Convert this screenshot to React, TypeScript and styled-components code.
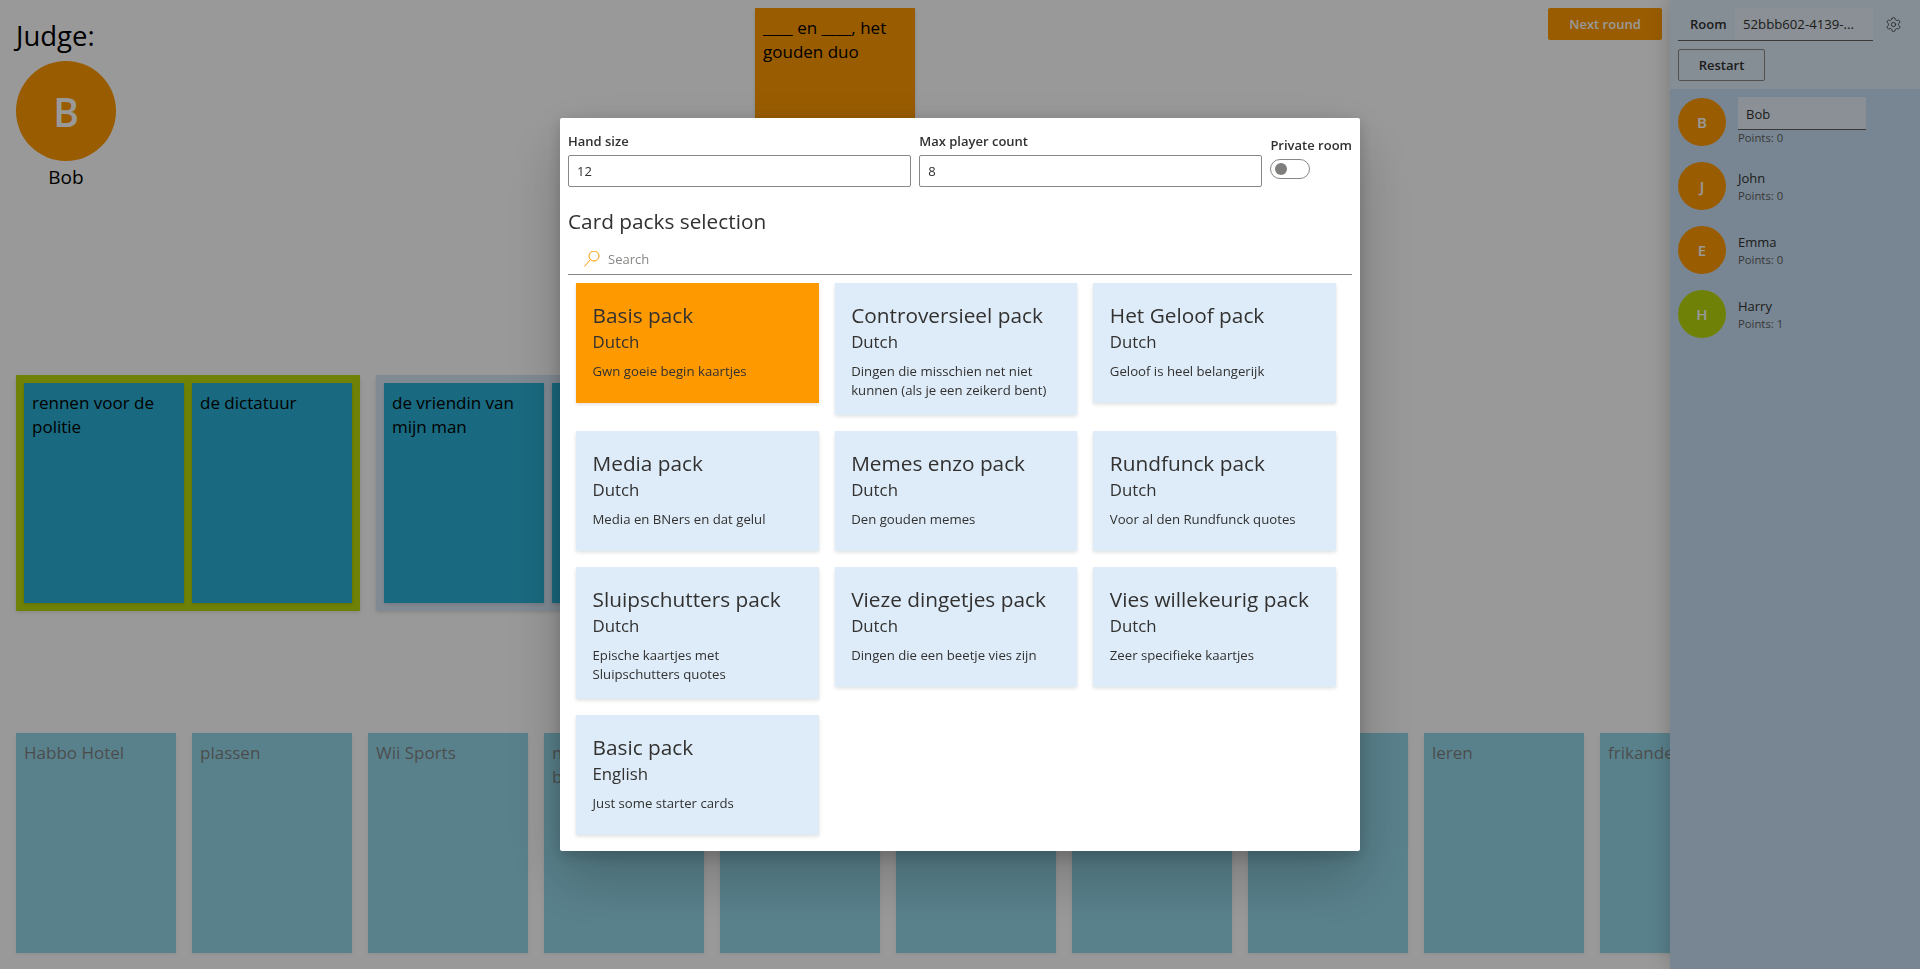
import React, { FC } from 'react';
import styled, { createGlobalStyle } from 'styled-components';
import { Settings } from 'lucide-react';

const GlobalStyle = createGlobalStyle`
    html, body {
        margin: 0;
        padding: 0;
        height: 100%;
        overflow: hidden;
        background: #fff;
        font-family: "Open Sans", "Liberation Sans", sans-serif;
        color: #323130;
    }
    * {
        box-sizing: border-box;
    }
`;

const Page = styled.div`
    display: flex;
    width: 100vw;
    height: 100vh;
    overflow: hidden;
`;
const Main = styled.main`
    flex: 1;
    min-width: 0;
    overflow: hidden;
    display: flex;
    flex-direction: column;
`;
const TopRow = styled.div`
    display: grid;
    grid-template-columns: 1fr 160px 1fr;
    padding: 8px 8px 0;
`;
const JudgeBox = styled.div`
    width: 100px;
    margin-left: 8px;
    color: #000;
`;
const JudgeTitle = styled.div`
    font-size: 27.5px;
    line-height: 36px;
    margin-top: 10px;
    margin-bottom: 7px;
    white-space: nowrap;
`;
const JudgeName = styled.div`
    font-size: 19px;
    line-height: 26px;
    margin-top: 3px;
    text-align: center;
`;
const Avatar = styled.div<{ $size: number; $color: string }>`
    width: ${p => p.$size}px;
    height: ${p => p.$size}px;
    flex: none;
    border-radius: 50%;
    background: ${p => p.$color};
    color: #fff;
    display: flex;
    align-items: center;
    justify-content: center;
    font-size: ${p => (p.$size > 60 ? 39 : 15)}px;
    font-weight: 600;
`;
const Card = styled.div<{ $color: string; $faded?: boolean }>`
    flex: none;
    width: 160px;
    height: 220px;
    padding: 8px;
    background: ${p => p.$color};
    color: #000;
    font-size: 17px;
    line-height: 24px;
    overflow: hidden;
    opacity: ${p => (p.$faded ? 0.5 : 1)};
    box-shadow: 0 1.6px 3.6px rgba(0, 0, 0, 0.13), 0 0.3px 0.9px rgba(0, 0, 0, 0.11);
`;
const NextButton = styled.button`
    justify-self: end;
    width: 114px;
    height: 32px;
    border: 0;
    border-radius: 2px;
    background: #ff9900;
    color: #fff;
    font-family: inherit;
    font-size: 13px;
    font-weight: 600;
`;
const AnswerRow = styled.div`
    display: flex;
    gap: 16px;
    margin: 147px 0 0 16px;
`;
const AnswerGroup = styled.div<{ $winner?: boolean }>`
    flex: none;
    display: flex;
    gap: 8px;
    padding: 8px;
    background: ${p => (p.$winner ? '#bad80a' : '#d8e6f6')};
    box-shadow: 0 1.6px 3.6px rgba(0, 0, 0, 0.13), 0 0.3px 0.9px rgba(0, 0, 0, 0.11);
`;
const HandRow = styled.div`
    display: flex;
    gap: 16px;
    margin: 122px 0 0 16px;
`;
const Sidebar = styled.aside`
    flex: none;
    width: 250px;
    background: #c7e0f4;
    box-shadow: 0 0 21px rgba(0, 0, 0, 0.22);
    position: relative;
`;
const RoomHeader = styled.div`
    height: 89px;
    padding: 8px;
    background: #deecf9;
`;
const RoomLine = styled.div`
    display: flex;
    align-items: center;
`;
const RoomField = styled.div`
    width: 195px;
    height: 33px;
    display: flex;
    border-bottom: 1px solid #605e5c;
`;
const RoomLabel = styled.label`
    width: 57px;
    padding-left: 12px;
    font-size: 13px;
    font-weight: 600;
    line-height: 32px;
    color: #323130;
`;
const RoomValue = styled.div`
    flex: 1;
    padding-left: 8px;
    background: #e6f0f8;
    font-size: 13.2px;
    line-height: 32px;
    white-space: nowrap;
    overflow: hidden;
`;
const GearButton = styled.span`
    display: flex;
    margin-left: 12px;
    color: #323130;
`;
const RestartButton = styled.button`
    display: block;
    width: 87px;
    height: 32px;
    margin-top: 8px;
    border: 1px solid #8a8886;
    border-radius: 2px;
    background: transparent;
    color: #323130;
    font-family: inherit;
    font-size: 13px;
    font-weight: 600;
`;
const PlayerList = styled.div`
    padding: 9px 8px 0;
    display: flex;
    flex-direction: column;
    gap: 16px;
`;
const PlayerRow = styled.div`
    display: flex;
    align-items: center;
    gap: 12px;
    height: 48px;
`;
const PlayerInfo = styled.div`
    display: flex;
    flex-direction: column;
`;
const PlayerName = styled.div`
    padding-top: 1px;
    font-size: 13px;
    line-height: 19px;
    color: #323130;
`;
const PlayerInput = styled.div`
    width: 128px;
    height: 33px;
    padding-left: 8px;
    margin-bottom: -1px;
    background: #e6f0f8;
    border-bottom: 1px solid #605e5c;
    font-size: 13px;
    line-height: 34px;
    color: #323130;
`;
const PlayerPoints = styled.div<{ $tight?: boolean }>`
    margin-top: ${p => (p.$tight ? -1 : 0)}px;
    font-size: 11.3px;
    line-height: 18px;
    color: #605e5c;
`;
const Overlay = styled.div`
    position: fixed;
    inset: 0;
    background: rgba(0, 0, 0, 0.4);
    display: flex;
    align-items: center;
    justify-content: center;
`;
const Modal = styled.div`
    width: 800px;
    height: 733px;
    padding: 8px;
    background: #fff;
    border-radius: 2px;
    box-shadow: 0 25.6px 57.6px rgba(0, 0, 0, 0.22), 0 4.8px 14.4px rgba(0, 0, 0, 0.18);
`;
const SettingsRow = styled.div`
    display: flex;
    gap: 8px;
`;
const Field = styled.div`
    width: 343.5px;
`;
const FieldLabel = styled.label`
    display: block;
    height: 29px;
    padding-top: 5px;
    font-size: 13px;
    font-weight: 600;
    line-height: 20px;
    color: #323130;
`;
const FieldInput = styled.div`
    height: 32px;
    padding-left: 8px;
    border: 1px solid #8a8886;
    border-radius: 2px;
    font-size: 13px;
    line-height: 30px;
    color: #323130;
`;
const ToggleField = styled.div``;
const ToggleLabel = styled(FieldLabel)`
    height: 33px;
    padding-top: 9px;
    white-space: nowrap;
`;
const Toggle = styled.span`
    display: flex;
    align-items: center;
    width: 40px;
    height: 20px;
    padding-left: 4px;
    border: 1px solid #8a8886;
    border-radius: 10px;
`;
const ToggleDot = styled.span`
    width: 12px;
    height: 12px;
    border-radius: 50%;
    background: #807e7c;
`;
const SectionTitle = styled.div`
    margin-top: 20px;
    font-size: 20.8px;
    line-height: 28px;
    color: #323130;
`;
const SearchBox = styled.div`
    display: flex;
    align-items: center;
    height: 32px;
    margin-top: 8px;
    padding-left: 16px;
    gap: 8px;
    border-bottom: 1px solid #8a8886;
    font-size: 13px;
    color: #8a8886;
`;
const PackGrid = styled.div`
    display: grid;
    grid-template-columns: repeat(3, 242.67px);
    gap: 16px;
    align-items: start;
    margin: 8px 0 0 8px;
`;
const PackCard = styled.div<{ $selected?: boolean }>`
    min-height: 120px;
    padding: 18px 16.5px 15px;
    background: ${p => (p.$selected ? '#ff9900' : '#deecf9')};
    color: #323130;
    box-shadow: 0 1.6px 3.6px rgba(0, 0, 0, 0.13), 0 0.3px 0.9px rgba(0, 0, 0, 0.11);
`;
const PackTitle = styled.div`
    margin-bottom: 2px;
    font-size: 20.8px;
    line-height: 28px;
`;
const PackLanguage = styled.div`
    font-size: 16.8px;
    line-height: 22px;
`;
const PackText = styled.div`
    margin-top: 9px;
    font-size: 13.2px;
    line-height: 19px;
`;

const SearchIcon: FC = () => (
    <svg width="16" height="16" viewBox="0 0 16 16" fill="none" stroke="#ff9900" strokeWidth="1">
        <circle cx="10" cy="5" r="5" />
        <line x1="6.4" y1="8.6" x2="0.5" y2="15.5" />
    </svg>
);

const teal = '#2bb0d5';
const orange = '#ff9900';
const green = '#bad80a';

const hand = ['Habbo Hotel', 'plassen', 'Wii Sports', 'nationale belastingdienst', '', '', '', '', 'leren', 'frikandel'];

const players = [
    { name: 'Bob', points: 0, color: orange, self: true },
    { name: 'John', points: 0, color: orange },
    { name: 'Emma', points: 0, color: orange },
    { name: 'Harry', points: 1, color: green },
];

const packs = [
    { title: 'Basis pack', language: 'Dutch', text: 'Gwn goeie begin kaartjes', selected: true },
    { title: 'Controversieel pack', language: 'Dutch', text: 'Dingen die misschien net niet kunnen (als je een zeikerd bent)' },
    { title: 'Het Geloof pack', language: 'Dutch', text: 'Geloof is heel belangerijk' },
    { title: 'Media pack', language: 'Dutch', text: 'Media en BNers en dat gelul' },
    { title: 'Memes enzo pack', language: 'Dutch', text: 'Den gouden memes' },
    { title: 'Rundfunck pack', language: 'Dutch', text: 'Voor al den Rundfunck quotes' },
    { title: 'Sluipschutters pack', language: 'Dutch', text: 'Epische kaartjes met Sluipschutters quotes' },
    { title: 'Vieze dingetjes pack', language: 'Dutch', text: 'Dingen die een beetje vies zijn' },
    { title: 'Vies willekeurig pack', language: 'Dutch', text: 'Zeer specifieke kaartjes' },
    { title: 'Basic pack', language: 'English', text: 'Just some starter cards' },
];

const App: FC = () => {
    return (
        <Page>
            <GlobalStyle />
            <Main>
                <TopRow>
                    <JudgeBox>
                        <JudgeTitle>Judge:</JudgeTitle>
                        <Avatar $size={100} $color={orange}>B</Avatar>
                        <JudgeName>Bob</JudgeName>
                    </JudgeBox>
                    <Card $color={orange}>____ en ____, het gouden duo</Card>
                    <NextButton>Next round</NextButton>
                </TopRow>
                <AnswerRow>
                    <AnswerGroup $winner>
                        <Card $color={teal}>rennen voor de politie</Card>
                        <Card $color={teal}>de dictatuur</Card>
                    </AnswerGroup>
                    <AnswerGroup>
                        <Card $color={teal}>de vriendin van mijn man</Card>
                        <Card $color={teal} />
                    </AnswerGroup>
                </AnswerRow>
                <HandRow>
                    {hand.map((text, i) => (
                        <Card key={i} $color={teal} $faded>{text}</Card>
                    ))}
                </HandRow>
            </Main>
            <Sidebar>
                <RoomHeader>
                    <RoomLine>
                        <RoomField>
                            <RoomLabel>Room</RoomLabel>
                            <RoomValue>52bbb602-4139-...</RoomValue>
                        </RoomField>
                        <GearButton><Settings size={17} strokeWidth={1.1} /></GearButton>
                    </RoomLine>
                    <RestartButton>Restart</RestartButton>
                </RoomHeader>
                <PlayerList>
                    {players.map(player => (
                        <PlayerRow key={player.name}>
                            <Avatar $size={48} $color={player.color}>{player.name[0]}</Avatar>
                            <PlayerInfo>
                                {player.self
                                    ? <PlayerInput>{player.name}</PlayerInput>
                                    : <PlayerName>{player.name}</PlayerName>}
                                <PlayerPoints $tight={!player.self}>Points: {player.points}</PlayerPoints>
                            </PlayerInfo>
                        </PlayerRow>
                    ))}
                </PlayerList>
            </Sidebar>
            <Overlay>
                <Modal>
                    <SettingsRow>
                        <Field>
                            <FieldLabel>Hand size</FieldLabel>
                            <FieldInput>12</FieldInput>
                        </Field>
                        <Field>
                            <FieldLabel>Max player count</FieldLabel>
                            <FieldInput>8</FieldInput>
                        </Field>
                        <ToggleField>
                            <ToggleLabel>Private room</ToggleLabel>
                            <Toggle><ToggleDot /></Toggle>
                        </ToggleField>
                    </SettingsRow>
                    <SectionTitle>Card packs selection</SectionTitle>
                    <SearchBox>
                        <SearchIcon />
                        Search
                    </SearchBox>
                    <PackGrid>
                        {packs.map(pack => (
                            <PackCard key={pack.title} $selected={pack.selected}>
                                <PackTitle>{pack.title}</PackTitle>
                                <PackLanguage>{pack.language}</PackLanguage>
                                <PackText>{pack.text}</PackText>
                            </PackCard>
                        ))}
                    </PackGrid>
                </Modal>
            </Overlay>
        </Page>
    );
};

export default App;
